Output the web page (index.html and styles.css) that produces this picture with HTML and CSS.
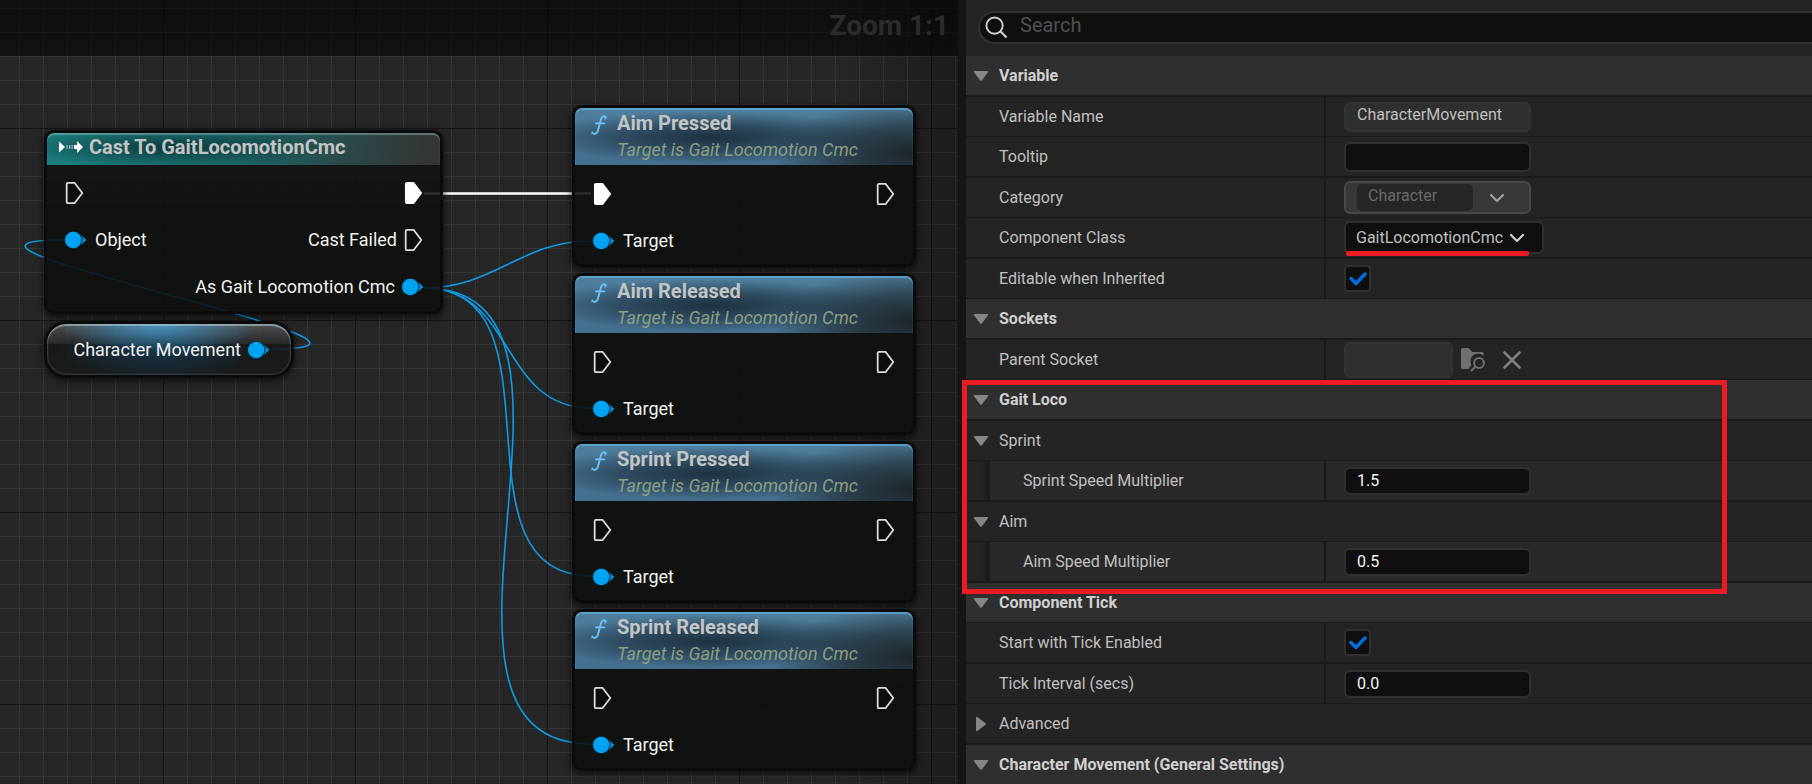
FILE: index.html
```html
<!DOCTYPE html>
<html lang="en">
<head>
<meta charset="utf-8">
<title>Blueprint Editor</title>
<link rel="stylesheet" href="styles.css">
</head>
<body>
<svg class="sprite" aria-hidden="true">
  <symbol id="exec" viewBox="0 0 20 24"><path d="M3 1.800h6.500l7.800 10.200-7.800 10.200H3q-1.300 0-1.300-1.300V3.100Q1.700 1.800 3 1.800z" fill="#0c0e0c" stroke="#dcdcdc" stroke-width="1.800" stroke-linejoin="round"/></symbol>
  <symbol id="exec-on" viewBox="0 0 20 24"><path d="M3 1.800h6.500l7.800 10.200-7.800 10.200H3q-1.300 0-1.300-1.300V3.100Q1.700 1.800 3 1.800z" fill="#fff" stroke="#fff" stroke-width="1.500" stroke-linejoin="round"/></symbol>
  <symbol id="object" viewBox="0 0 22 18"><path d="M16 4L21.500 9l-5.500 5z" fill="#0090df"/><circle cx="8.500" cy="9" r="9" fill="#0b2a3a"/><circle cx="8.200" cy="9" r="8.200" fill="#00a3f2"/></symbol>
  <symbol id="func" viewBox="0 0 16 20"><path d="M14.500 3.600c.4-2-.9-2.600-2.200-2.200-1.500.4-2.200 2-2.700 4L7.200 14.800c-.6 2.400-1.500 3.800-3.200 4-1.700.2-3-.4-2.600-1.500" fill="none" stroke="#6ec1ff" stroke-width="1.900" stroke-linecap="round"/><path d="M4.600 8.400h9" stroke="#6ec1ff" stroke-width="1.600" stroke-linecap="round"/></symbol>
  <symbol id="cast" viewBox="0 0 24 14"><path d="M0 1.500L6 7l-6 5.500zM15 5h3V1l6 6-6 6V9h-3z" fill="#fff"/><path d="M7.500 5h1.200v4H7.500zM10 5h1.200v4H10zM12.500 5h1.200v4h-1.200z" fill="#fff" opacity=".6"/></symbol>
  <symbol id="chev" viewBox="0 0 16 10"><path d="M2 2l6 6 6-6" fill="none" stroke="currentColor" stroke-width="2.200" stroke-linecap="round" stroke-linejoin="round"/></symbol>
  <symbol id="tri" viewBox="0 0 16 10"><path d="M1.500 0h13q1.300.3.500 1.300L9 9.300q-1 1-2 0L1 1.300Q.2.300 1.500 0z" fill="#868686"/></symbol>
</svg>

<div class="editor">
  <main class="graph">
    <svg class="wires" aria-hidden="true">
      <path class="wire wire--exec" d="M424 193.500H591"/>
      <path class="wire" d="M424 288C494 288 521 241 591 241"/>
      <path class="wire" d="M424 288C516 288 499 408 591 408"/>
      <path class="wire" d="M424 288C570 288 445 576 591 576"/>
      <path class="wire" d="M424 288C630 288 385 744 591 744"/>
      <path class="wire" d="M272 349C460 349-125 240 63 240"/>
    </svg>

    <header class="graph-bar">Zoom 1:1</header>

    <article class="node node--cast">
      <h2 class="node-head"><svg class="i-cast"><use href="#cast"/></svg>Cast To GaitLocomotionCmc</h2>
      <div class="pins">
        <div class="pin-row"><span class="pin"><svg class="i-exec"><use href="#exec"/></svg></span><span class="pin"><svg class="i-exec"><use href="#exec-on"/></svg></span></div>
        <div class="pin-row"><span class="pin"><svg class="i-obj"><use href="#object"/></svg>Object</span><span class="pin pin--out">Cast Failed<svg class="i-exec"><use href="#exec"/></svg></span></div>
        <div class="pin-row pin-row--end"><span class="pin pin--out">As Gait Locomotion Cmc<svg class="i-obj"><use href="#object"/></svg></span></div>
      </div>
    </article>

    <article class="node-var"><span class="pin pin--out">Character Movement<svg class="i-obj"><use href="#object"/></svg></span></article>

    <div class="stack">
      <article class="node node--func">
        <header class="node-head"><svg class="i-func"><use href="#func"/></svg><h2>Aim Pressed</h2><p>Target is Gait Locomotion Cmc</p></header>
        <div class="pins">
          <div class="pin-row"><span class="pin"><svg class="i-exec"><use href="#exec-on"/></svg></span><span class="pin"><svg class="i-exec"><use href="#exec"/></svg></span></div>
          <div class="pin-row"><span class="pin"><svg class="i-obj"><use href="#object"/></svg>Target</span></div>
        </div>
      </article>
      <article class="node node--func">
        <header class="node-head"><svg class="i-func"><use href="#func"/></svg><h2>Aim Released</h2><p>Target is Gait Locomotion Cmc</p></header>
        <div class="pins">
          <div class="pin-row"><span class="pin"><svg class="i-exec"><use href="#exec"/></svg></span><span class="pin"><svg class="i-exec"><use href="#exec"/></svg></span></div>
          <div class="pin-row"><span class="pin"><svg class="i-obj"><use href="#object"/></svg>Target</span></div>
        </div>
      </article>
      <article class="node node--func">
        <header class="node-head"><svg class="i-func"><use href="#func"/></svg><h2>Sprint Pressed</h2><p>Target is Gait Locomotion Cmc</p></header>
        <div class="pins">
          <div class="pin-row"><span class="pin"><svg class="i-exec"><use href="#exec"/></svg></span><span class="pin"><svg class="i-exec"><use href="#exec"/></svg></span></div>
          <div class="pin-row"><span class="pin"><svg class="i-obj"><use href="#object"/></svg>Target</span></div>
        </div>
      </article>
      <article class="node node--func">
        <header class="node-head"><svg class="i-func"><use href="#func"/></svg><h2>Sprint Released</h2><p>Target is Gait Locomotion Cmc</p></header>
        <div class="pins">
          <div class="pin-row"><span class="pin"><svg class="i-exec"><use href="#exec"/></svg></span><span class="pin"><svg class="i-exec"><use href="#exec"/></svg></span></div>
          <div class="pin-row"><span class="pin"><svg class="i-obj"><use href="#object"/></svg>Target</span></div>
        </div>
      </article>
    </div>
  </main>

  <aside class="details">
    <label class="search">
      <svg class="i-search" viewBox="0 0 24 24"><circle cx="10" cy="10" r="8.500" fill="none" stroke="#d0d0d0" stroke-width="2"/><path d="M16 16l6.500 6.500" stroke="#d0d0d0" stroke-width="2.200"/></svg>
      <input type="search" placeholder="Search" aria-label="Search">
    </label>

    <section class="group">
      <h3 class="row row--head"><button class="fold" type="button"><svg class="i-tri"><use href="#tri"/></svg>Variable</button></h3>
      <div class="row"><label class="name" for="var-name">Variable Name</label><div class="value"><input class="field field--off" id="var-name" type="text" value="CharacterMovement" readonly></div></div>
      <div class="row"><label class="name" for="tooltip">Tooltip</label><div class="value"><input class="field" id="tooltip" type="text"></div></div>
      <div class="row"><label class="name" for="category">Category</label><div class="value"><div class="combo"><input id="category" type="text" value="Character" disabled><button type="button" aria-label="Choose category"><svg class="i-chev"><use href="#chev"/></svg></button></div></div></div>
      <div class="row"><label class="name" for="class">Component Class</label><div class="value"><div class="picker"><select id="class"><option>GaitLocomotionCmc</option></select><svg class="i-chev"><use href="#chev"/></svg></div></div></div>
      <div class="row"><label class="name" for="inherited">Editable when Inherited</label><div class="value"><span class="check"><input id="inherited" type="checkbox" checked><svg class="i-check" viewBox="0 0 18 14"><path d="M2 6.500l5 5L16 2" fill="none" stroke="#0070e0" stroke-width="3.400" stroke-linecap="round" stroke-linejoin="round"/></svg></span></div></div>
    </section>

    <section class="group">
      <h3 class="row row--head"><button class="fold" type="button"><svg class="i-tri"><use href="#tri"/></svg>Sockets</button></h3>
      <div class="row"><label class="name" for="socket">Parent Socket</label><div class="value"><input class="field field--socket" id="socket" type="text" readonly>
        <button class="tool" type="button" aria-label="Browse sockets"><svg class="i-tool" viewBox="0 0 24 24"><path d="M0 1.500Q0 0 1.500 0H7.500l4 4h9.500q1.500 0 1.500 1.500v2.300a7.600 7.600 0 0 0-12 9.200l-3 4H1.500Q0 21 0 19.500z" fill="#707070"/><circle cx="18" cy="15" r="4.900" fill="none" stroke="#707070" stroke-width="2"/><path d="M14.500 18.500L10 23" stroke="#707070" stroke-width="2.200"/></svg></button>
        <button class="tool tool--clear" type="button" aria-label="Clear socket"><svg class="i-clear" viewBox="0 0 18 18"><path d="M1.500 1.500l15 15M16.500 1.500l-15 15" stroke="#808080" stroke-width="2.600" stroke-linecap="round"/></svg></button>
      </div></div>
    </section>

    <section class="group group--marked">
      <h3 class="row row--head"><button class="fold" type="button"><svg class="i-tri"><use href="#tri"/></svg>Gait Loco</button></h3>
      <div class="row row--sub"><button class="fold" type="button"><svg class="i-tri"><use href="#tri"/></svg>Sprint</button></div>
      <div class="row row--nested"><label class="name" for="sprint-mult">Sprint Speed Multiplier</label><div class="value"><input class="field field--number" id="sprint-mult" type="text" value="1.5"></div></div>
      <div class="row row--sub"><button class="fold" type="button"><svg class="i-tri"><use href="#tri"/></svg>Aim</button></div>
      <div class="row row--nested"><label class="name" for="aim-mult">Aim Speed Multiplier</label><div class="value"><input class="field field--number" id="aim-mult" type="text" value="0.5"></div></div>
    </section>

    <section class="group group--even">
      <h3 class="row row--head"><button class="fold" type="button"><svg class="i-tri"><use href="#tri"/></svg>Component Tick</button></h3>
      <div class="row"><label class="name" for="tick">Start with Tick Enabled</label><div class="value"><span class="check"><input id="tick" type="checkbox" checked><svg class="i-check" viewBox="0 0 18 14"><path d="M2 6.500l5 5L16 2" fill="none" stroke="#0070e0" stroke-width="3.400" stroke-linecap="round" stroke-linejoin="round"/></svg></span></div></div>
      <div class="row"><label class="name" for="interval">Tick Interval (secs)</label><div class="value"><input class="field field--number" id="interval" type="text" value="0.0"></div></div>
      <div class="row row--sub"><button class="fold fold--closed" type="button"><svg class="i-tri"><use href="#tri"/></svg>Advanced</button></div>
    </section>

    <section class="group">
      <h3 class="row row--head"><button class="fold" type="button"><svg class="i-tri"><use href="#tri"/></svg>Character Movement (General Settings)</button></h3>
    </section>
  </aside>
</div>
</body>
</html>
```
FILE: styles.css
```css
* { box-sizing: border-box; }

body {
  margin: 0;
  background: #151515;
  color: #c0c0c0;
  font: 16px/20px Roboto, "Noto Sans", sans-serif;
}

h2, h3, p { margin: 0; font: inherit; }
button, input, select { margin: 0; padding: 0; border: 0; background: none; color: inherit; font: inherit; }
svg { display: block; flex: none; }
.sprite { position: absolute; width: 0; height: 0; }

.editor {
  display: grid;
  grid-template-columns: minmax(0, 958fr) minmax(0, 846fr);
  column-gap: 8px;
  height: 100vh;
  overflow: hidden;
}

/* Graph canvas */
.graph {
  position: relative;
  overflow: hidden;
  background-color: #262626;
  background-image:
    linear-gradient(to right, transparent 88%, rgba(0, 0, 0, .25)),
    linear-gradient(to right, #151515 1px, transparent 1px),
    linear-gradient(#151515 1px, transparent 1px),
    linear-gradient(to right, #353535 1px, transparent 1px),
    linear-gradient(#353535 1px, transparent 1px);
  background-size: 100% 100%, 192px 192px, 192px 192px, 24px 24px, 24px 24px;
  background-position: 0 0, 163px 128px, 163px 128px, 19px 8px, 19px 8px;
}

.graph-bar {
  height: 56px;
  padding: 11px 9px 0 0;
  background: linear-gradient(rgba(0, 0, 0, .62), rgba(0, 0, 0, .56));
  color: #2c2c2c;
  font-size: 28px;
  font-weight: 700;
  line-height: 30px;
  text-align: right;
}

.wires { position: absolute; left: 0; top: 0; width: 100%; height: 100%; }
.wire { fill: none; stroke: #0c9de6; stroke-width: 1.6; }
.wire--exec { stroke: #fff; stroke-width: 2.6; }

.node {
  border: 3px solid #0b0b0b;
  border-radius: 10px;
  background: linear-gradient(rgba(20, 22, 19, .86), rgba(13, 15, 13, .88) 50%) padding-box;
  box-shadow: 0 2px 6px 1px rgba(0, 0, 0, .6);
}
.node--cast { position: absolute; left: 44px; top: 130px; width: 399px; }
.stack { position: absolute; left: 572px; top: 105px; width: 344px; display: flex; flex-direction: column; gap: 6px; }

.node-head {
  border-radius: 7px 7px 0 0;
  color: #c4c4c4;
  font-size: 20px;
  font-weight: 700;
  line-height: 24px;
}
.node--cast .node-head {
  display: flex;
  align-items: center;
  gap: 6px;
  height: 32px;
  padding: 0 12px 4px;
  background:
    radial-gradient(ellipse 42% 60% at 32% 45%, rgba(8, 40, 42, .75), transparent),
    linear-gradient(100deg, #1c7f80 0, #1b6c6d 45%, #2a4a4a 75%, #353535 96%);
  box-shadow: inset 0 2px 1px rgba(170, 210, 210, .4);
}
.node--func .node-head {
  display: grid;
  grid-template-columns: 26px 1fr;
  height: 57px;
  padding: 3px 16px 0;
  background:
    radial-gradient(ellipse 52% 46% at 40% 52%, rgba(28, 46, 60, .95), rgba(28, 46, 60, .6) 50%, transparent),
    radial-gradient(ellipse 42% 90% at 100% 80%, rgba(26, 32, 35, .95), rgba(30, 38, 42, .65) 50%, transparent),
    linear-gradient(#4f7f9e, #44708f);
  box-shadow: inset 0 2px 1px rgba(98, 172, 222, .75);
}
.node-head h2 { font-weight: 700; }
.node-head p {
  grid-column: 2;
  color: #8e9e82;
  font-size: 18px;
  font-style: italic;
  font-weight: 400;
  line-height: 30px;
}

.pins { display: flex; flex-direction: column; gap: 17px; padding: 14px 17px 8px 18px; }
.node--cast .pins { padding: 13px 16px 9px 18px; }
.pin-row { display: flex; justify-content: space-between; height: 30px; }
.pin-row--end { justify-content: flex-end; }
.pin { display: flex; align-items: center; gap: 8px; color: #f2f2f2; font-size: 18px; line-height: 24px; white-space: nowrap; }
.pin--out { gap: 7px; }

.node-var {
  position: absolute;
  left: 44px;
  top: 321px;
  display: flex;
  align-items: center;
  justify-content: flex-end;
  width: 250px;
  height: 57px;
  padding: 0 21px;
  border: 3px solid #0b0b0b;
  border-radius: 22px;
  background:
    radial-gradient(ellipse 42% 55% at 46% 0, rgba(74, 158, 208, .9), transparent) padding-box,
    radial-gradient(ellipse 42% 60% at 46% 50%, rgba(20, 62, 88, .8), transparent) padding-box,
    linear-gradient(rgba(88, 88, 88, .8), rgba(42, 42, 42, .7) 38%, rgba(20, 22, 21, .85) 40%, rgba(24, 25, 24, .88)) padding-box;
  box-shadow: 0 2px 6px 1px rgba(0, 0, 0, .6), inset 0 2px 1px rgba(200, 220, 230, .5), inset 0 0 2px 1px rgba(140, 140, 140, .3);
}

.i-exec { width: 20px; height: 24px; }
.i-obj { width: 22px; height: 18px; }
.i-cast { width: 24px; height: 14px; }
.i-func { width: 16px; height: 20px; margin-top: 4px; }

/* Details panel */
.details { min-width: 0; background: #242424; }

.search {
  display: flex;
  align-items: center;
  gap: 12px;
  height: 33px;
  margin: 11px 0 12px 12px;
  padding-left: 5px;
  border: 2px solid #323232;
  border-right: 0;
  border-radius: 17px 0 0 17px;
  background: #0f0f0f;
}
.search input { flex: 1; min-width: 0; padding-bottom: 6px; outline: 0; font-size: 20px; line-height: 24px; }
.search input::placeholder { color: #505050; opacity: 1; }
.i-search { width: 23px; height: 23px; }

.group { position: relative; }
.row {
  display: grid;
  grid-template-columns: minmax(0, 360fr) minmax(0, 486fr);
  height: 40px;
  border-bottom: 1px solid #1a1a1a;
}
.row:nth-child(odd) { height: 41px; border-bottom-width: 2px; }
.group--even .row:nth-child(odd) { height: 40px; border-bottom-width: 1px; }
.group--even .row:nth-child(even) { height: 41px; border-bottom-width: 2px; }

.row--head { background: #2f2f2f; font-weight: 700; color: #d0d0d0; }
.row--head, .row--sub { grid-template-columns: 1fr; }
.fold { display: flex; align-items: center; gap: 10px; padding-left: 7px; text-align: left; }
.i-tri { width: 16px; height: 10px; }
.fold--closed .i-tri { transform: rotate(-90deg); }

.name { display: flex; align-items: center; padding-left: 33px; border-right: 2px solid #1a1a1a; }
.value { display: flex; align-items: center; padding-left: 18px; }

.row--nested { background: linear-gradient(to right, #242424 16px, #1a1a1a 24px, #292929 24px); }
.row--nested .name { padding-left: 57px; }

.field {
  width: 187px;
  height: 30px;
  padding: 0 11px;
  border: 2px solid #303030;
  border-radius: 6px;
  background: #0f0f0f;
}
.field--off { padding-bottom: 4px; background: #2f2f2f; border-color: #333; }
.field--number { height: 28px; color: #f4f4f4; }
.field--socket { width: 109px; height: 36px; background: #2f2f2f; border-color: #333; }

.combo {
  display: flex;
  align-items: center;
  width: 187px;
  height: 33px;
  padding-left: 11px;
  border: 2px solid #484848;
  border-radius: 6px;
  background: #383838;
}
.combo input { width: 116px; height: 27px; padding: 0 11px 4px; border-radius: 5px; background: #262626; color: #6a6a6a; }
.combo button { flex: 1; display: flex; padding-left: 16px; color: #a0a0a0; }

.picker {
  position: relative;
  display: flex;
  align-items: center;
  width: 200px;
  height: 33px;
  border: 2px solid #303030;
  border-radius: 6px;
  background: #0f0f0f;
}
.picker select { width: 100%; height: 100%; padding-left: 10px; appearance: none; outline: 0; }
.picker .i-chev { position: absolute; right: 17px; top: 10px; pointer-events: none; color: #d0d0d0; }
.picker::after { content: ""; position: absolute; left: 0; bottom: -4px; width: 183px; height: 5px; border-radius: 2px; background: #ed1c24; }
.i-chev { width: 16px; height: 10px; }

.check {
  display: grid;
  place-items: center;
  width: 27px;
  height: 27px;
  border: 2px solid #303030;
  border-radius: 4px;
  background: #0f0f0f;
}
.check > * { grid-area: 1 / 1; }
.check input { appearance: none; width: 100%; height: 100%; }
.i-check { width: 18px; height: 14px; visibility: hidden; pointer-events: none; }
.check input:checked + .i-check { visibility: visible; }

.tool { margin-left: 8px; }
.tool--clear { margin-left: 18px; }
.i-tool { width: 24px; height: 24px; }
.i-clear { width: 18px; height: 18px; }

.group--marked::after {
  content: "";
  position: absolute;
  z-index: 1;
  top: 0;
  right: 10%;
  bottom: -11px;
  left: -4px;
  border: 5px solid #ed1c24;
  pointer-events: none;
}
```
